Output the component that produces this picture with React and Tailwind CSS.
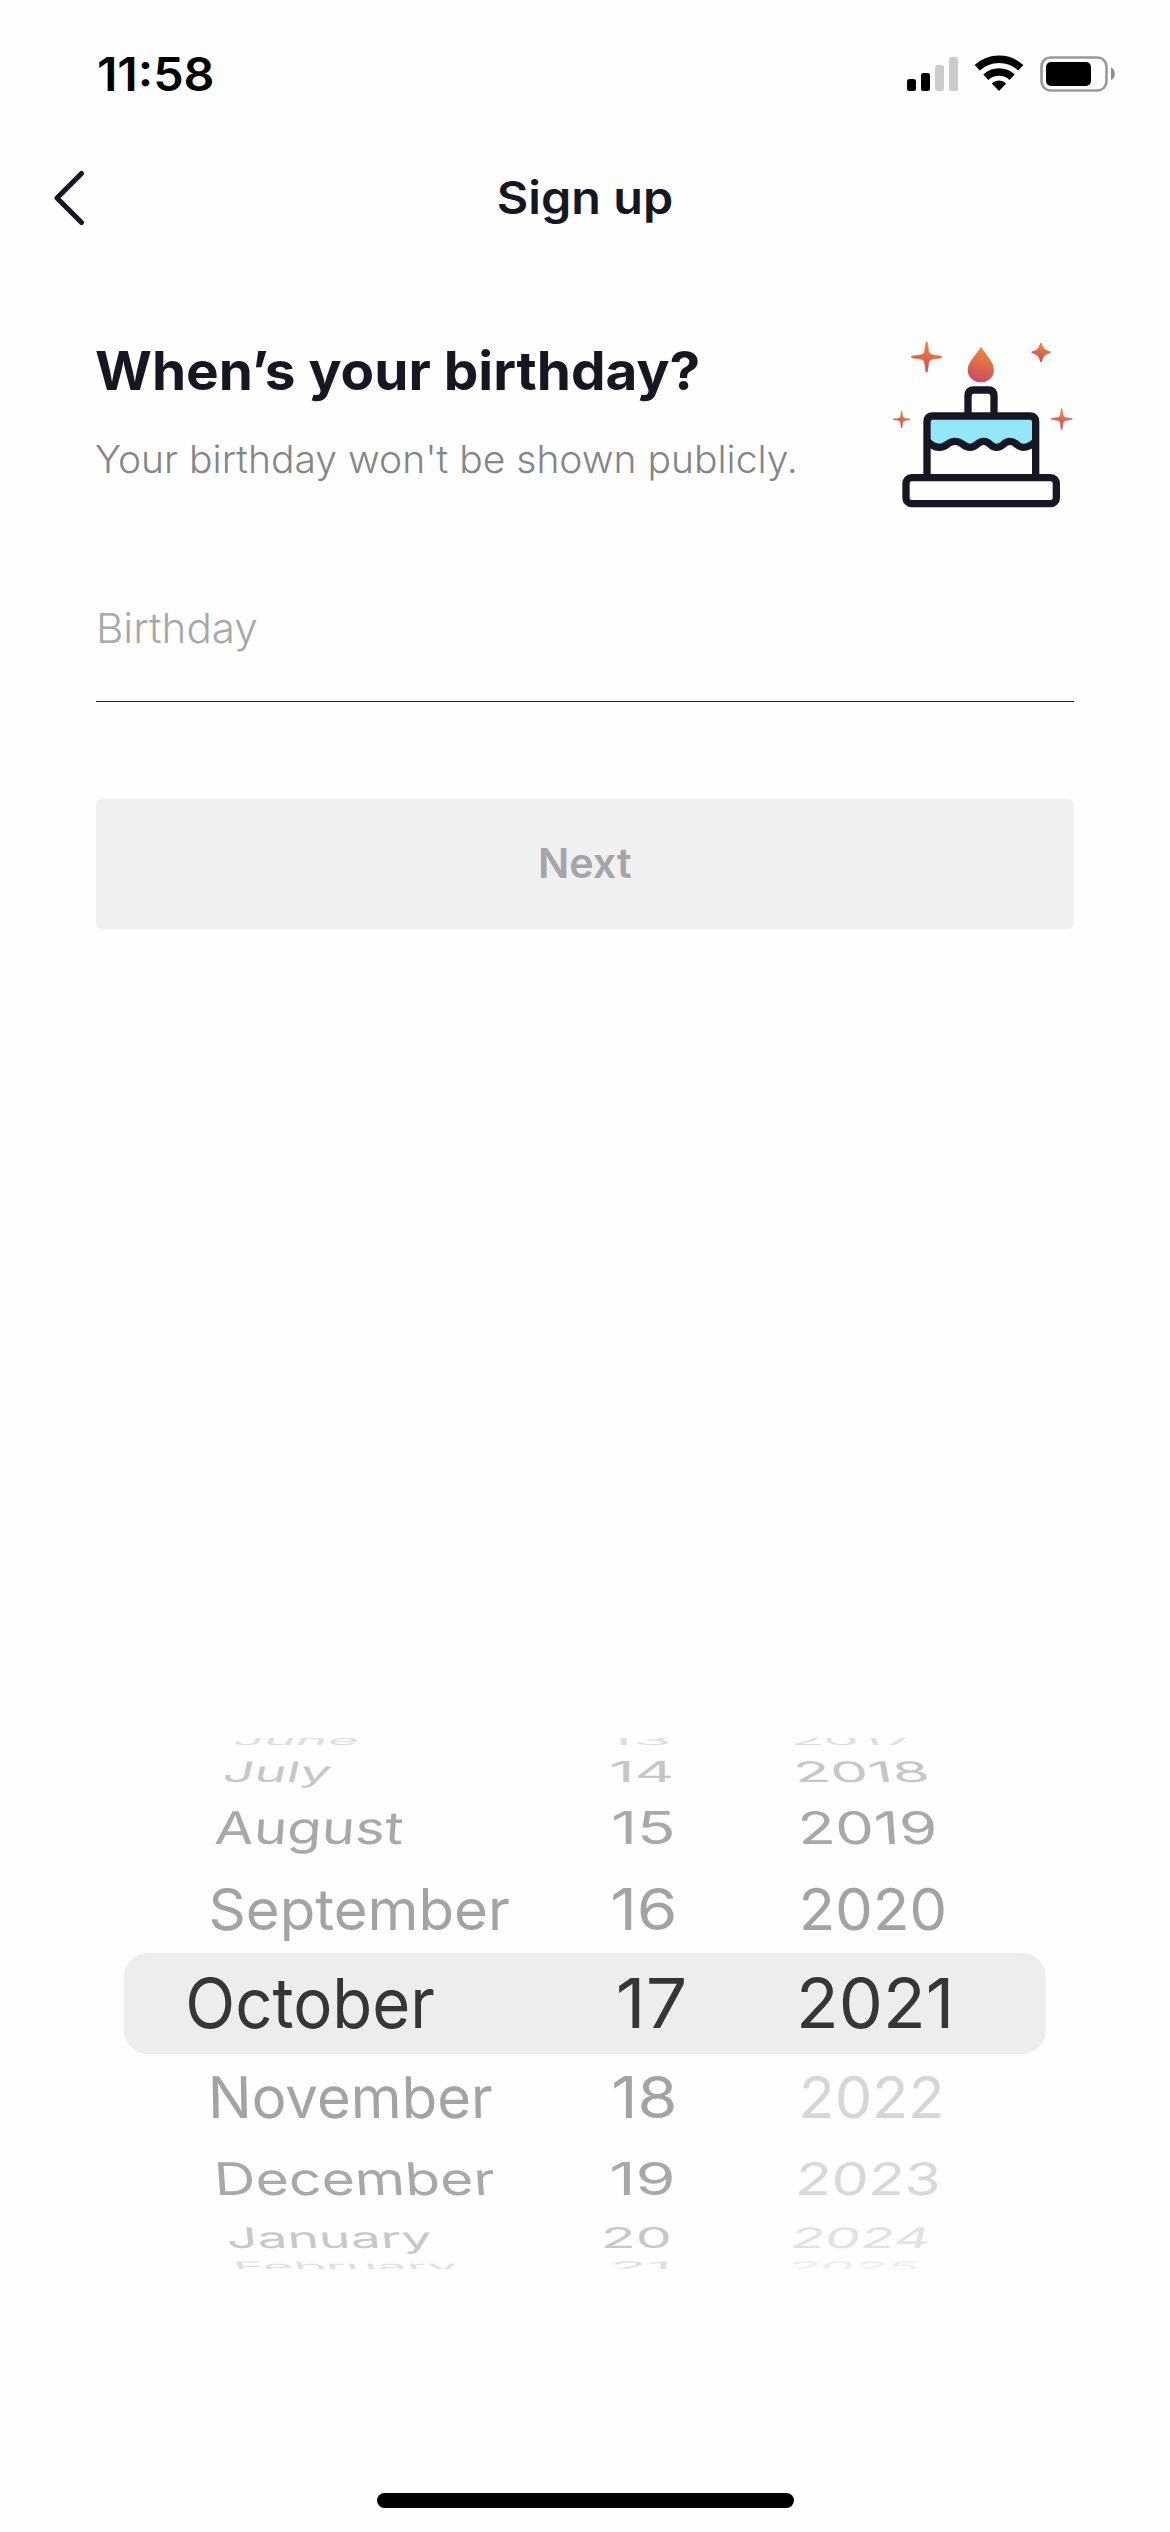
import { useLayoutEffect, useRef, useState } from 'react';

const MONTHS = [
  { text: 'June', left: 56, width: 121, skew: -28, color: 'text-[#dedede]' },
  { text: 'July', left: 46, width: 104, skew: -13, color: 'text-[#c6c6c6]' },
  { text: 'August', left: 36, width: 187, skew: -4, color: 'text-[#a8a8a8]' },
  { text: 'September', left: 31, width: 298, skew: 0, color: 'text-[#a3a3a3]' },
  { text: 'October', left: 9, width: 245, skew: 0, color: 'text-[#363636]' },
  { text: 'November', left: 33, width: 279, skew: 1, color: 'text-[#a3a3a3]' },
  { text: 'December', left: 39, width: 275, skew: 4, color: 'text-[#a8a8a8]' },
  { text: 'January', left: 49, width: 201, skew: 6, color: 'text-[#c8c8c8]' },
  { text: 'February', left: 58, width: 218, skew: 20, color: 'text-[#dedede]' },
];

const DAYS = [
  { text: '13', left: 9, width: 59, skew: 8, color: 'text-[#dedede]' },
  { text: '14', left: 12, width: 59, skew: 0, color: 'text-[#c6c6c6]' },
  { text: '15', left: 14, width: 58, skew: 0, color: 'text-[#a8a8a8]' },
  { text: '16', left: 13, width: 61, skew: 0, color: 'text-[#a3a3a3]' },
  { text: '17', left: 19, width: 65, skew: 0, color: 'text-[#363636]' },
  { text: '18', left: 14, width: 60, skew: 0, color: 'text-[#a3a3a3]' },
  { text: '19', left: 12, width: 60, skew: 0, color: 'text-[#a8a8a8]' },
  { text: '20', left: 5, width: 64, skew: 0, color: 'text-[#c8c8c8]' },
  { text: '21', left: 14, width: 52, skew: -8, color: 'text-[#dedede]' },
];

const YEARS = [
  { text: '2017', left: 13, width: 118, skew: 24, color: 'text-[#dedede]' },
  { text: '2018', left: 18, width: 128, skew: 10, color: 'text-[#c6c6c6]' },
  { text: '2019', left: 22, width: 132, skew: 4, color: 'text-[#a8a8a8]' },
  { text: '2020', left: 23, width: 141, skew: 1, color: 'text-[#a3a3a3]' },
  { text: '2021', left: 21, width: 147, skew: 0, color: 'text-[#363636]' },
  { text: '2022', left: 23, width: 138, skew: -1, color: 'text-[#d6d6d6]' },
  { text: '2023', left: 20, width: 138, skew: -4, color: 'text-[#d8d8d8]' },
  { text: '2024', left: 15, width: 133, skew: -12, color: 'text-[#e2e2e2]' },
  { text: '2025', left: 12, width: 125, skew: -24, color: 'text-[#ededed]' },
];

// the rows get flatter the further they are from the selected one
const ROWS = [
  { height: 'h-[5px]', scaleY: 0.19 },
  { height: 'h-[56px]', scaleY: 0.41 },
  { height: 'h-[59px]', scaleY: 0.65 },
  { height: 'h-[103px]', scaleY: 0.83 },
  { height: 'h-[84px]', scaleY: 1 },
  { height: 'h-[105px]', scaleY: 0.83 },
  { height: 'h-[58px]', scaleY: 0.65 },
  { height: 'h-[58px]', scaleY: 0.41 },
  { height: 'h-px', scaleY: 0.19 },
];

// stretches a single line of text so its ink is exactly `width` px wide
function FitText({ width, scaleY = 1, skew = 0, className = '', children }) {
  const ref = useRef(null);
  const [fit, setFit] = useState({ scale: 1, shift: 0 });

  useLayoutEffect(() => {
    const ctx = document.createElement('canvas').getContext('2d');
    const style = getComputedStyle(ref.current);
    ctx.font = `${style.fontWeight} ${style.fontSize} ${style.fontFamily}`;
    const m = ctx.measureText(children);
    const scale = width / (m.actualBoundingBoxLeft + m.actualBoundingBoxRight);
    setFit({ scale, shift: m.actualBoundingBoxLeft * scale });
  }, [width, children]);

  return (
    <span className={`block shrink-0 whitespace-nowrap leading-none ${className}`} style={{ width }}>
      <span
        ref={ref}
        className="block w-max origin-left"
        style={{ transform: `translateX(${fit.shift}px) skewX(${skew}deg) scale(${fit.scale}, ${scaleY})` }}
      >
        {children}
      </span>
    </span>
  );
}

function StatusIcons() {
  return (
    <svg width="212" height="40" viewBox="0 0 212 40" fill="none">
      <rect x="2" y="25" width="9" height="12" rx="2.5" fill="#000" />
      <rect x="16" y="19" width="9" height="18" rx="2.5" fill="#000" />
      <rect x="30" y="11" width="9" height="26" rx="2.5" fill="#cbcbcb" />
      <rect x="44" y="3" width="9" height="34" rx="2.5" fill="#cbcbcb" />
      <path d="M72.2 13.8A32 32 0 0 1 115.8 13.8" stroke="#000" strokeWidth="7.5" />
      <path d="M80.9 23.2A19.2 19.2 0 0 1 107.1 23.2" stroke="#000" strokeWidth="7.5" />
      <path d="M94 37L86.8 29.5A10.4 10.4 0 0 1 101.2 29.5Z" fill="#000" />
      <rect x="136.5" y="3.5" width="65" height="33" rx="9" stroke="#999" strokeWidth="2.6" />
      <rect x="141" y="8" width="45" height="24" rx="5" fill="#000" />
      <path d="M206 13.5c5 1.5 5 11 0 12.5z" fill="#8c8c8c" />
    </svg>
  );
}

function Sparkle({ x, y, r }) {
  return (
    <path
      transform={`translate(${x} ${y}) scale(${r / 46})`}
      d="M0-46C4-46 4-22 7-15C9-9 14-7 20-6C30-4 46-4 46 0C46 4 30 4 20 6C14 7 9 9 7 15C4 22 4 46 0 46C-4 46-4 22-7 15C-9 9-14 7-20 6C-30 4-46 4-46 0C-46-4-30-4-20-6C-14-7-9-9-7-15C-4-22-4-46 0-46Z"
      fill="url(#warm)"
      stroke="url(#warm)"
      strokeWidth="2"
    />
  );
}

function BirthdayCake() {
  return (
    <svg width="230" height="210" viewBox="0 0 690 630" fill="none" className="-mr-[26px] shrink-0">
      <defs>
        <linearGradient id="warm" x1="0.6" y1="0" x2="0.4" y2="1">
          <stop offset="0" stopColor="#ee8a3a" />
          <stop offset="0.5" stopColor="#de6a4b" />
          <stop offset="1" stopColor="#c84a6c" />
        </linearGradient>
      </defs>
      <Sparkle x={170} y={111} r={46} />
      {/* the top right one is stubbier than the rest */}
      <path
        d="M513 71Q516 92 539 97Q516 102 513 123Q510 102 487 97Q510 92 513 71Z"
        fill="url(#warm)"
        stroke="url(#warm)"
        strokeWidth="6"
        strokeLinejoin="round"
      />
      <Sparkle x={95} y={298} r={26} />
      <Sparkle x={575} y={297} r={32} />
      <path d="M333 80C345 101 372 126 372 150A39.5 37 0 0 1 293 150C293 126 321 101 333 80Z" fill="url(#warm)" />
      <path
        d="M172 290H497V366Q478 382 459 382C439 382 441 364 420 364C399 364 401 382 380 382C359 382 362 364 341 364C320 364 322 382 300 382C278 382 279 364 255 364C231 364 232 382 209 382Q190 382 172 366Z"
        fill="#93e8f7"
      />
      <g stroke="#161722" strokeWidth="22">
        <path d="M172 364Q190 382 209 382C232 382 231 364 255 364C279 364 278 382 300 382C322 382 320 364 341 364C362 364 359 382 380 382C401 382 399 364 420 364C441 364 439 382 459 382Q478 382 497 364" />
        <path d="M171 473V306Q171 288 189 288H479Q497 288 497 306V473" />
        <path d="M294 288V228Q294 210 312 210H354Q372 210 372 228V288" />
        <rect x="108" y="473" width="451" height="78" rx="17" />
      </g>
    </svg>
  );
}

function WheelColumn({ items, className }) {
  return (
    <div className={`flex shrink-0 flex-col ${className}`}>
      {items.map((item, i) => (
        <div
          key={item.text}
          className={`flex shrink-0 items-center ${ROWS[i].height}`}
          style={{ paddingLeft: item.left }}
        >
          <FitText width={item.width} scaleY={ROWS[i].scaleY} skew={item.skew} className={item.color}>
            {item.text}
          </FitText>
        </div>
      ))}
    </div>
  );
}

function App() {
  return (
    <div className="flex h-[2532px] w-[1170px] flex-col overflow-hidden bg-[#fefefe] font-['Inter',sans-serif] text-[#161722]">
      <div className="flex h-[148px] shrink-0 items-center justify-between pl-[99px] pr-[53px]">
        <FitText width={114} className="text-[46px] font-semibold text-black">
          11:58
        </FitText>
        <StatusIcons />
      </div>

      <div className="grid h-[100px] shrink-0 grid-cols-[1fr_auto_1fr] items-center">
        <svg width="40" height="60" viewBox="0 0 40 60" fill="none" className="ml-[50px]">
          <path d="M31.5 5.5L7 30L31.5 54.5" stroke="#161722" strokeWidth="5.2" strokeLinecap="round" strokeLinejoin="round" />
        </svg>
        <FitText width={173} className="pb-0.5 text-[45px] font-semibold">
          Sign up
        </FitText>
      </div>

      <div className="flex shrink-0 flex-col px-24 pt-[72px]">
        <div className="flex h-[210px] justify-between">
          <div className="pt-6">
            <FitText width={602} className="text-[54px] font-bold">
              When’s your birthday?
            </FitText>
            <FitText width={699} className="mt-[42px] text-[38px] font-light text-[#848589]">
              Your birthday won't be shown publicly.
            </FitText>
          </div>
          <BirthdayCake />
        </div>

        <div className="mt-[78px] border-b border-[#222] pb-[52px] pl-[3px]">
          <FitText width={158} className="text-[41px] font-light text-[#a8a8a8]">
            Birthday
          </FitText>
        </div>

        <button type="button" className="mt-[97px] flex h-[130px] items-center justify-center rounded-md bg-[#f0f0f0]">
          <FitText width={90} className="pb-0.5 pl-px text-left text-[41px] font-semibold text-[#a4a4aa]">
            Next
          </FitText>
        </button>
      </div>

      <div className="relative mt-[809px] flex h-[531px] shrink-0 overflow-hidden pl-[180px] text-[69px]">
        <div className="absolute left-[124px] top-[215px] h-[101px] w-[922px] rounded-3xl bg-[#ededed]" />
        <div className="relative flex">
          <WheelColumn items={MONTHS} className="w-[420px]" />
          <WheelColumn items={DAYS} className="w-[180px]" />
          <WheelColumn items={YEARS} className="w-[200px]" />
        </div>
      </div>

      <div className="mx-auto mt-[224px] h-[15px] w-[417px] shrink-0 rounded-full bg-black" />
    </div>
  );
}

export default App;
